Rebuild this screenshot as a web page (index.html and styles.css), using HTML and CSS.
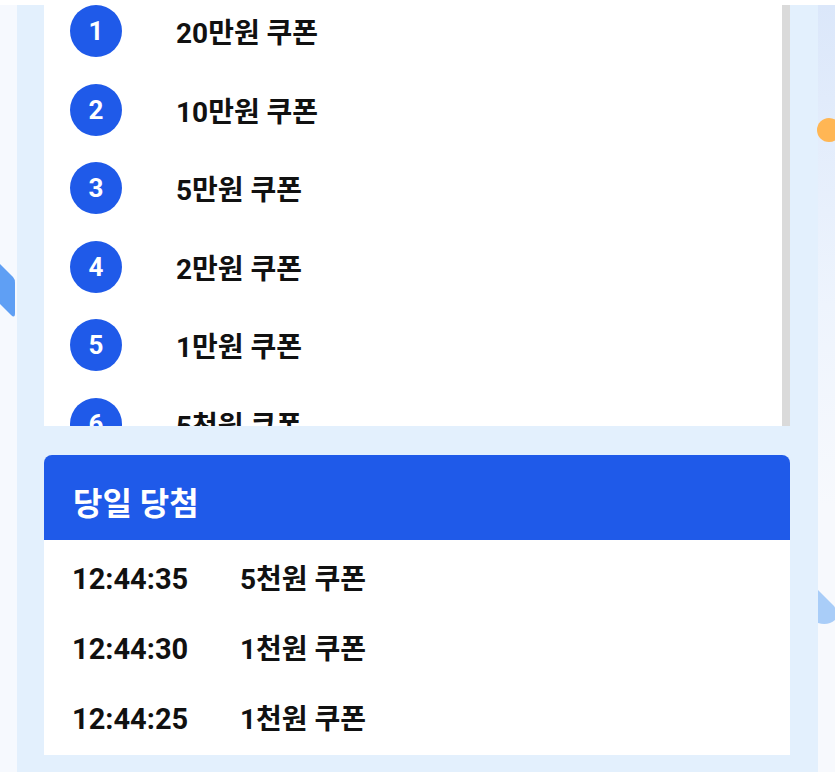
FILE: index.html
```html
<!DOCTYPE html>
<html lang="ko">
  <head>
    <meta charset="UTF-8" />
    <title>쿠폰 당첨</title>
    <link rel="stylesheet" href="styles.css">
  </head>
  <body>
    <div class="deco deco-left">
      <svg width="17" height="90" viewBox="0 0 17 90">
        <path d="M-8 22 L0 30 L13 43 Q15 45 15 49 L15 79 Q15 85 11 81 L0 70 L-8 62 Z" fill="#5f9ff4" />
      </svg>
    </div>
    <div class="deco deco-right-strip"></div>
    <div class="deco deco-orange"></div>
    <div class="deco deco-drop">
      <svg width="17" height="40" viewBox="0 0 17 40">
        <path d="M0 0 L16 16 Q22 24 17 30 Q10 36 0 33 Z" fill="#a9cdf8" />
      </svg>
    </div>

    <div class="top-edge"></div>

    <div class="panel">
      <div class="rank-list">
        <div class="rank-item">
          <span class="rank-num">1</span>
          <span class="rank-name">20만원 쿠폰</span>
        </div>
        <div class="rank-item">
          <span class="rank-num">2</span>
          <span class="rank-name">10만원 쿠폰</span>
        </div>
        <div class="rank-item">
          <span class="rank-num">3</span>
          <span class="rank-name">5만원 쿠폰</span>
        </div>
        <div class="rank-item">
          <span class="rank-num">4</span>
          <span class="rank-name">2만원 쿠폰</span>
        </div>
        <div class="rank-item">
          <span class="rank-num">5</span>
          <span class="rank-name">1만원 쿠폰</span>
        </div>
        <div class="rank-item">
          <span class="rank-num">6</span>
          <span class="rank-name">5천원 쿠폰</span>
        </div>
      </div>

      <div class="today">
        <div class="today-head">당일 당첨</div>
        <div class="today-rows">
          <div class="today-row">
            <span class="time">12:44:35</span>
            <span class="prize">5천원 쿠폰</span>
          </div>
          <div class="today-row">
            <span class="time">12:44:30</span>
            <span class="prize">1천원 쿠폰</span>
          </div>
          <div class="today-row">
            <span class="time">12:44:25</span>
            <span class="prize">1천원 쿠폰</span>
          </div>
        </div>
      </div>
    </div>
  </body>
</html>
```

FILE: styles.css
```css
body {
  margin: 0;
  height: 772px;
  overflow: hidden;
  background: #f6f9fe;
  font-family: Roboto, "Noto Sans CJK KR", sans-serif;
  color: #111;
  position: relative;
}

.top-edge {
  height: 5px;
  background: #fff;
}

.panel {
  margin-left: 17px;
  width: 801px;
  box-sizing: border-box;
  padding: 0 28px 17px 27px;
  background: #e3f0fd;
}

/* ranking list, clipped like a scrolled box */
.rank-list {
  height: 421px;
  overflow: hidden;
  background: #fff;
  border-right: 8px solid #dadada;
  padding-left: 26px;
}

.rank-item {
  display: flex;
  align-items: center;
  height: 52px;
  margin-bottom: 26.5px;
}

.rank-num {
  width: 52px;
  height: 52px;
  border-radius: 50%;
  background: #1f5ae9;
  color: #fff;
  font-size: 26px;
  font-weight: bold;
  display: flex;
  align-items: center;
  justify-content: center;
  flex-shrink: 0;
}

.rank-name {
  margin-left: 54px;
  font-size: 28px;
  font-weight: bold;
}

/* today's winners */
.today {
  margin-top: 29px;
}

.today-head {
  height: 85px;
  background: #1f5ae9;
  border-radius: 8px 8px 0 0;
  color: #fff;
  font-size: 32px;
  font-weight: bold;
  padding-left: 29px;
  display: flex;
  align-items: center;
  padding-top: 6px;
  box-sizing: border-box;
}

.today-rows {
  background: #fff;
  padding: 3px 0 2px 28px;
}

.today-row {
  height: 70px;
  display: flex;
  align-items: baseline;
  box-sizing: border-box;
  padding-top: 14px;
  font-weight: bold;
}

.time {
  width: 168px;
  font-size: 29px;
}

.prize {
  font-size: 28px;
}

/* background decorations at the edges */
.deco {
  position: absolute;
}

.deco-left {
  left: 0;
  top: 234px;
}

.deco-right-strip {
  right: 0;
  top: 5px;
  width: 17px;
  height: 767px;
  background: linear-gradient(#dbe7fa, #eef4fd 300px, #f7f9fd 500px);
}

.deco-orange {
  left: 817px;
  top: 118px;
  width: 24px;
  height: 24px;
  border-radius: 50%;
  background: #ffb654;
}

.deco-drop {
  left: 818px;
  top: 590px;
}
```
